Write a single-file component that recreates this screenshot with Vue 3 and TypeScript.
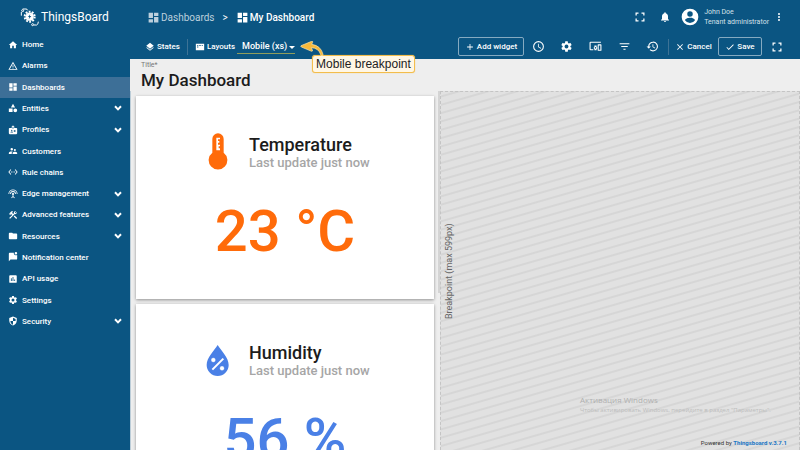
<script setup lang="ts">
import { h, ref } from 'vue'

const shapes: Record<string, string> = {
  home: 'M10 20v-6h4v6h5v-8h3L12 3 2 12h3v8z',
  alarms: 'M12 5.99 19.53 19H4.47L12 5.99M12 2 1 21h22L12 2zm1 14h-2v2h2v-2zm0-6h-2v5h2v-5z',
  dashboards: 'M3 13h8V3H3v10zm0 8h8v-6H3v6zm10 0h8V11h-8v10zm0-18v6h8V3h-8z',
  entities: 'M12 2 7 10.5h10zM17.5 13a4.5 4.5 0 1 0 0 9 4.5 4.5 0 0 0 0-9zM2 13h9v8.5H2z',
  profiles: 'M20 7h-5V4a2 2 0 0 0-2-2h-2a2 2 0 0 0-2 2v3H4a2 2 0 0 0-2 2v11a2 2 0 0 0 2 2h16a2 2 0 0 0 2-2V9a2 2 0 0 0-2-2zM11 4h2v5h-2zM9 11.5a1.5 1.5 0 1 1 0 3 1.5 1.5 0 0 1 0-3zM12 18H6v-.7c0-1.2 1.8-1.8 3-1.8s3 .6 3 1.8zm6-1.5h-4V15h4zm0-3h-4V12h4z',
  customers: 'M16.5 12a2.5 2.5 0 1 0 0-5 2.5 2.5 0 0 0 0 5zM9 11a3 3 0 1 0 0-6 3 3 0 0 0 0 6zm7.5 3c-1.83 0-5.5.92-5.5 2.75V19h11v-2.25C22 14.92 18.33 14 16.5 14zM9 13c-2.33 0-7 1.17-7 3.5V19h7v-2.25c0-.85.33-2.34 2.37-3.47C10.5 13.1 9.66 13 9 13z',
  rules: 'M7.77 6.76 6.23 5.48.82 12l5.41 6.52 1.54-1.28L3.42 12zM7 13h2v-2H7zm10-2h-2v2h2zm-6 2h2v-2h-2zm6.77-7.52-1.54 1.28L20.58 12l-4.35 5.24 1.54 1.28L23.18 12z',
  edge: 'M12 5a7 7 0 0 0-7 7h2a5 5 0 0 1 10 0h2a7 7 0 0 0-7-7zm1 9.29A2.5 2.5 0 1 0 11 14.29v3.3L7.59 21 9 22.41l3-3 3 3L16.41 21 13 17.59zM12 1A11 11 0 0 0 1 12h2a9 9 0 0 1 18 0h2A11 11 0 0 0 12 1z',
  advanced: 'm13.78 15.3 6 6 2.11-2.16-6-6zM17.5 10.1c1.93 0 3.5-1.57 3.5-3.5 0-.58-.16-1.12-.41-1.6l-2.7 2.7-1.49-1.49 2.7-2.7C18.62 3.26 18.08 3.1 17.5 3.1 15.57 3.1 14 4.67 14 6.6c0 .41.08.8.21 1.16l-1.85 1.85-1.78-1.78.71-.71-1.41-1.41L12 3.59a3 3 0 0 0-4.24 0L4.22 7.13l1.41 1.41H2.81l-.71.71 3.54 3.54.71-.71V9.25l1.41 1.41.71-.71 1.78 1.78-7.41 7.41 2.12 2.12L16.34 9.89c.36.13.75.21 1.16.21z',
  resources: 'M10 4H4a2 2 0 0 0-2 2v12a2 2 0 0 0 2 2h16a2 2 0 0 0 2-2V8a2 2 0 0 0-2-2h-8z',
  notification: 'M22 6.98V16a2 2 0 0 1-2 2H6l-4 4V4a2 2 0 0 1 2-2h10.1A5 5 0 0 0 19 8c1.13 0 2.16-.39 3-1.02zM16 3a3 3 0 1 0 6 0 3 3 0 0 0-6 0z',
  api: 'M19 3H5a2 2 0 0 0-2 2v14a2 2 0 0 0 2 2h14a2 2 0 0 0 2-2V5a2 2 0 0 0-2-2zM9 17H7v-7h2zm4 0h-2V7h2zm4 0h-2v-4h2z',
  settings: 'M19.14 12.94c.04-.3.06-.61.06-.94s-.02-.64-.07-.94l2.03-1.58a.49.49 0 0 0 .12-.61l-1.92-3.32a.49.49 0 0 0-.59-.22l-2.39.96a7 7 0 0 0-1.62-.94l-.36-2.54A.48.48 0 0 0 13.92 2.4h-3.84a.48.48 0 0 0-.48.41l-.36 2.54a7 7 0 0 0-1.62.94l-2.39-.96a.48.48 0 0 0-.59.22L2.72 8.87a.48.48 0 0 0 .12.61l2.03 1.58a6.5 6.5 0 0 0 0 1.88l-2.03 1.58a.49.49 0 0 0-.12.61l1.92 3.32c.12.22.37.29.59.22l2.39-.96c.5.38 1.03.7 1.62.94l.36 2.54c.05.24.24.41.48.41h3.84c.24 0 .44-.17.48-.41l.36-2.54a7 7 0 0 0 1.62-.94l2.39.96c.22.08.47 0 .59-.22l1.92-3.32a.48.48 0 0 0-.12-.61zM12 15.6a3.6 3.6 0 1 1 0-7.2 3.6 3.6 0 0 1 0 7.2z',
  security: 'M12 1 3 5v6c0 5.55 3.84 10.74 9 12 5.16-1.26 9-6.45 9-12V5zm0 3.2 6.2 2.75V12H12v8.9c-3.7-1.2-6.2-4.9-6.2-8.9H12z',
  chevron: 'M7.41 7.2 12 11.8l4.59-4.6L19.4 10 12 17.4 4.6 10z',
  states: 'm11.99 18.54-7.37-5.73L3 14.07l9 7 9-7-1.63-1.27zM12 16l7.36-5.73L21 9l-9-7-9 7 1.63 1.27z',
  layouts: 'M2 4h20v16H2zM5 7v2h3V7zm5 0v2h4V7zm6 0v2h3V7zM5 11v2h3v-2z',
  plus: 'M19 13h-6v6h-2v-6H5v-2h6V5h2v6h6z',
  clock: 'M12 2a10 10 0 1 0 0 20 10 10 0 0 0 0-20zm0 18a8 8 0 1 1 0-16 8 8 0 0 1 0 16zm.5-13H11v6l5.25 3.15.75-1.23-4.5-2.67z',
  devices: 'M3 5h19V3H3a2 2 0 0 0-2 2v12a2 2 0 0 0 2 2h5v-2H3zm11 5h-4v1.8a3.5 3.5 0 0 0 0 5.4V19h4v-1.8a3.5 3.5 0 0 0 0-5.4zm-2 6a1.5 1.5 0 1 1 0-3 1.5 1.5 0 0 1 0 3zM22 8h-5a1 1 0 0 0-1 1v10a1 1 0 0 0 1 1h5a1 1 0 0 0 1-1V9a1 1 0 0 0-1-1zm-1 10h-3v-8h3z',
  filter: 'M10 18h4v-2h-4zM3 6v2h18V6zm3 7h12v-2H6z',
  history: 'M13 3a9 9 0 0 0-9 9H1l3.89 3.89.07.14L9 12H6a7 7 0 1 1 2.06 4.94l-1.42 1.42A9 9 0 1 0 13 3zm-1 5v5l4.28 2.54.72-1.21-3.5-2.08V8z',
  close: 'M19 6.41 17.59 5 12 10.59 6.41 5 5 6.41 10.59 12 5 17.59 6.41 19 12 13.41 17.59 19 19 17.59 13.41 12z',
  check: 'M9 16.17 4.83 12l-1.42 1.41L9 19 21 7l-1.41-1.41z',
  fullscreen: 'M3 3h6v2.5H5.5V9H3zm12 0h6v6h-2.5V5.5H15zM3 15h2.5v3.5H9V21H3zm15.5 0H21v6h-6v-2.5h3.5z',
  bell: 'M12 22a2 2 0 0 0 2-2h-4a2 2 0 0 0 2 2zm6-6v-5c0-3.07-1.64-5.64-4.5-6.32V4a1.5 1.5 0 0 0-3 0v.68C7.63 5.36 6 7.92 6 11v5l-2 2v1h16v-1z',
  account: 'M12 2a10 10 0 1 0 0 20 10 10 0 0 0 0-20zm0 3a3.3 3.3 0 1 1 0 6.6A3.3 3.3 0 0 1 12 5zm0 14.2a7.2 7.2 0 0 1-6-3.22c.03-1.99 4-3.08 6-3.08s5.97 1.09 6 3.08a7.2 7.2 0 0 1-6 3.22z',
  more: 'M12 8a2 2 0 1 0 0-4 2 2 0 0 0 0 4zm0 2a2 2 0 1 0 0 4 2 2 0 0 0 0-4zm0 6a2 2 0 1 0 0 4 2 2 0 0 0 0-4z',
}

const Icon = (props: { name: string }) =>
  h('svg', { viewBox: '0 0 24 24', 'aria-hidden': 'true', fill: 'currentColor' }, [
    h('path', { d: shapes[props.name], 'fill-rule': 'evenodd' }),
  ])

interface MenuItem {
  icon: string
  label: string
  expandable?: boolean
}

const menu: MenuItem[] = [
  { icon: 'home', label: 'Home' },
  { icon: 'alarms', label: 'Alarms' },
  { icon: 'dashboards', label: 'Dashboards' },
  { icon: 'entities', label: 'Entities', expandable: true },
  { icon: 'profiles', label: 'Profiles', expandable: true },
  { icon: 'customers', label: 'Customers' },
  { icon: 'rules', label: 'Rule chains' },
  { icon: 'edge', label: 'Edge management', expandable: true },
  { icon: 'advanced', label: 'Advanced features', expandable: true },
  { icon: 'resources', label: 'Resources', expandable: true },
  { icon: 'notification', label: 'Notification center' },
  { icon: 'api', label: 'API usage' },
  { icon: 'settings', label: 'Settings' },
  { icon: 'security', label: 'Security', expandable: true },
]

const tools = [
  { icon: 'clock', label: 'Time window' },
  { icon: 'settings', label: 'Dashboard settings' },
  { icon: 'devices', label: 'Entity aliases' },
  { icon: 'filter', label: 'Filters' },
  { icon: 'history', label: 'Version control' },
]

const active = ref('Dashboards')
const title = ref('My Dashboard')
const breakpoint = ref('xs')
</script>

<template>
  <div class="page">
    <aside class="sidebar">
      <a class="brand" href="#">
        <svg class="logo" viewBox="0 0 60 60" aria-hidden="true" fill="none" stroke="#fff">
          <circle cx="29" cy="29" r="12" fill="#fff" />
          <circle cx="29" cy="29" r="15" stroke-width="6" stroke-dasharray="5.500 3.925" />
          <path d="M31 21 24 30h4l-2 7 8-10h-5z" fill="#0b5582" stroke="none" />
          <circle cx="8" cy="11" r="3" stroke-width="3" />
          <path d="M4 26V15M8 6h10q4 0 5 4" stroke-width="3" />
          <circle cx="38" cy="53" r="3" stroke-width="3" />
          <path d="M42 54h8q5-2 5-10" stroke-width="3" />
        </svg>
        <span>ThingsBoard</span>
      </a>
      <nav class="menu" aria-label="Main">
        <a
          v-for="item in menu"
          :key="item.label"
          href="#"
          class="item"
          :class="{ active: item.label === active }"
          @click.prevent="active = item.label"
        >
          <Icon :name="item.icon" class="item-icon" />
          <span>{{ item.label }}</span>
          <Icon v-if="item.expandable" name="chevron" class="chevron" />
        </a>
      </nav>
    </aside>

    <div class="main">
      <header class="header">
        <nav class="crumbs" aria-label="Breadcrumb">
          <a href="#" class="crumb parent"><Icon name="dashboards" class="crumb-icon" />Dashboards</a>
          <span class="sep">&gt;</span>
          <a href="#" class="crumb"><Icon name="dashboards" class="crumb-icon" />My Dashboard</a>
        </nav>
        <div class="account">
          <button class="icon-btn" aria-label="Fullscreen"><Icon name="fullscreen" class="i12" /></button>
          <button class="icon-btn" aria-label="Notifications"><Icon name="bell" class="i12" /></button>
          <Icon name="account" class="avatar" />
          <div class="user">
            <span>John Doe</span>
            <span>Tenant administrator</span>
          </div>
          <button class="icon-btn more" aria-label="More"><Icon name="more" class="i12" /></button>
        </div>
      </header>

      <div class="toolbar">
        <button class="text-btn"><Icon name="states" class="i10" />States</button>
        <span class="divider"></span>
        <button class="text-btn"><Icon name="layouts" class="i10" />Layouts</button>
        <div class="picker">
          <select v-model="breakpoint" aria-label="Breakpoint">
            <option value="xs">Mobile (xs)</option>
            <option value="default">Default</option>
          </select>
          <div class="callout">
            <svg class="arrow" viewBox="0 0 72 45" aria-hidden="true">
              <path
                d="M3 14 35 1q4-1 3 3l-3 6q28 4 34 30 1 4-3 4t-4-3Q56 21 34 20l3 7q2 4-2 4L4 18q-3-2-1-4z"
                fill="#f6b93b"
                stroke="#ffe9b0"
                stroke-width="2"
              />
            </svg>
            <span class="bubble">Mobile breakpoint</span>
          </div>
        </div>
        <div class="actions">
          <button class="text-btn outlined add"><Icon name="plus" class="i10" />Add widget</button>
          <div class="tools">
            <button v-for="tool in tools" :key="tool.icon" class="tool" :aria-label="tool.label">
              <Icon :name="tool.icon" class="i13" />
            </button>
          </div>
          <span class="divider"></span>
          <button class="text-btn cancel"><Icon name="close" class="i10" />Cancel</button>
          <button class="text-btn outlined save"><Icon name="check" class="i10" />Save</button>
          <button class="tool expand" aria-label="Expand"><Icon name="fullscreen" class="i12" /></button>
        </div>
      </div>

      <div class="title">
        <label for="dashboard-title">Title*</label>
        <input id="dashboard-title" v-model="title" type="text" />
      </div>

      <main class="canvas">
        <div class="widgets">
          <section class="card warm">
            <div class="card-head">
              <svg class="card-icon" viewBox="0 0 72 114" aria-hidden="true">
                <path
                  d="M36 1a17 17 0 0 0-17 17v41a28 28 0 1 0 34 0V18A17 17 0 0 0 36 1zM31 14h11v5h-6v5h4v5h-4v6h6v5h-4v6h4v6H31z"
                  fill="currentColor"
                  fill-rule="evenodd"
                />
              </svg>
              <div>
                <h2>Temperature</h2>
                <p>Last update just now</p>
              </div>
            </div>
            <strong class="value">23 °C</strong>
          </section>
          <section class="card cool">
            <div class="card-head">
              <svg class="card-icon" viewBox="0 0 72 114" aria-hidden="true">
                <path d="M35 12C24 30 2 50 2 72a33 33 0 0 0 66 0C68 50 46 30 35 12z" fill="currentColor" />
                <g stroke="#fff" fill="#fff">
                  <path d="M19 86 52 53" stroke-width="6" />
                  <circle cx="22" cy="57" r="6" />
                  <circle cx="48" cy="82" r="6" />
                </g>
              </svg>
              <div>
                <h2>Humidity</h2>
                <p>Last update just now</p>
              </div>
            </div>
            <strong class="value">56 %</strong>
          </section>
        </div>
        <div class="scroll"><span class="thumb"></span></div>
        <div class="outside">
          <span class="limit">Breakpoint (max 599px)</span>
          <div class="watermark">
            <span class="wm-title">Активация Windows</span>
            <span>Чтобы активировать Windows, перейдите в раздел "Параметры".</span>
          </div>
          <footer class="powered">Powered by <a href="#">Thingsboard v.3.7.1</a></footer>
        </div>
      </main>
    </div>
  </div>
</template>

<style>
body {
  margin: 0;
  overflow: hidden;
}
</style>

<style scoped>
.page {
  display: flex;
  height: 100vh;
  overflow: hidden;
  font-family: Roboto, "Liberation Sans", sans-serif;
  color: #fff;
  background: #eee;
}
.page * {
  box-sizing: border-box;
}
a {
  color: inherit;
  text-decoration: none;
}
button {
  font: inherit;
  color: inherit;
  background: none;
  border: 0;
  padding: 0;
  cursor: pointer;
}
svg {
  flex: none;
  display: block;
}
.sidebar {
  flex: none;
  width: 130px;
  background: #0b5582;
}
.brand {
  display: flex;
  align-items: center;
  gap: 1px;
  height: 34px;
  padding-left: 20px;
  font-size: 12px;
}
.logo {
  width: 20px;
  height: 20px;
}
.menu {
  display: grid;
  grid-auto-rows: 1fr;
  height: 298px;
}
.item {
  display: flex;
  align-items: center;
  gap: 4px;
  padding: 0 6px 0 8px;
  font-size: 8px;
  font-weight: 500;
  white-space: nowrap;
}
.item.active {
  background: #3d6f97;
}
.item-icon,
.i10 {
  width: 10px;
  height: 10px;
}
.i12 {
  width: 12px;
  height: 12px;
}
.i13 {
  width: 13px;
  height: 13px;
}
.chevron {
  width: 12px;
  height: 12px;
  margin-left: auto;
}
.main {
  flex: 1;
  min-width: 0;
  display: flex;
  flex-direction: column;
}
.header {
  flex: none;
  display: flex;
  align-items: center;
  justify-content: space-between;
  height: 34px;
  padding: 0 13px 0 17px;
  background: #0b5582;
}
.crumbs,
.crumb,
.account {
  display: flex;
  align-items: center;
}
.crumbs {
  gap: 8px;
  font-size: 10px;
}
.crumb {
  gap: 1px;
  font-weight: 500;
}
.crumb.parent {
  font-weight: 400;
  color: #bdd0dd;
}
.crumb-icon {
  width: 13px;
  height: 13px;
}
.icon-btn {
  display: grid;
  place-items: center;
  width: 25px;
  height: 24px;
}
.avatar {
  width: 20px;
  height: 20px;
  margin-left: 3px;
}
.user {
  display: flex;
  flex-direction: column;
  margin-left: 4px;
  font-size: 7px;
  line-height: 10px;
  color: #d4e0e9;
}
.icon-btn.more {
  width: 16px;
  margin-left: 2px;
}
.toolbar {
  flex: none;
  display: flex;
  align-items: center;
  height: 25px;
  padding: 0 13px 0 15px;
  background: #0b5582;
  font-size: 8px;
  font-weight: 500;
}
.text-btn {
  display: flex;
  align-items: center;
  justify-content: center;
  gap: 2px;
  white-space: nowrap;
}
.divider {
  width: 1px;
  height: 16px;
  margin: 0 7px;
  background: #3d7396;
}
.outlined {
  height: 19px;
  border: 1px solid #85aac1;
  border-radius: 2px;
}
.picker {
  position: relative;
  margin-left: 2px;
}
.picker select {
  display: block;
  width: 58px;
  height: 14px;
  padding: 0 5px;
  font: inherit;
  font-size: 9px;
  color: inherit;
  appearance: none;
  border: 0;
  border-bottom: 1px solid #8f9d5c;
  border-radius: 0;
  background: none;
}
.picker::after {
  content: "";
  position: absolute;
  right: 0;
  top: 6px;
  border: 3px solid transparent;
  border-top-color: #fff;
  border-bottom: 0;
}
.callout {
  position: absolute;
  left: 63px;
  top: 1px;
  z-index: 2;
}
.arrow {
  width: 24px;
  height: 15px;
}
.bubble {
  display: block;
  margin: -1px 0 0 12px;
  padding: 0 3px;
  border: 1px solid #f3bd4c;
  border-radius: 3px;
  background: #fff7e6;
  color: #222;
  font: 12px/16px "Liberation Sans", sans-serif;
  white-space: nowrap;
  box-shadow: 0 0 1px #f3bd4c;
}
.actions {
  display: flex;
  align-items: center;
  margin-left: auto;
}
.actions .divider {
  margin: 0 6px 0 1px;
}
.add {
  width: 66px;
}
.tools {
  display: grid;
  grid-template-columns: repeat(5, 1fr);
  width: 143px;
}
.tool {
  display: grid;
  place-items: center;
}
.cancel {
  width: 37px;
}
.save {
  width: 44px;
  margin-left: 6px;
}
.expand {
  width: 20px;
  margin-left: 5px;
}
.title {
  flex: none;
  display: flex;
  flex-direction: column;
  height: 32px;
  padding: 2px 10px 0 11px;
  color: #1c1c1c;
}
.title label {
  font-size: 7px;
  line-height: 8px;
  color: #777;
}
.title input {
  width: 100%;
  height: 22px;
  padding: 0;
  border: 0;
  background: none;
  font: 500 17px/22px Roboto, "Liberation Sans", sans-serif;
  color: inherit;
  outline: 0;
}
.canvas {
  flex: 1;
  min-height: 0;
  display: grid;
  grid-template-columns: 308px 2px 1fr;
}
.widgets {
  display: flex;
  flex-direction: column;
  gap: 5px;
  padding: 5px 4px 0 5px;
  border-left: 1px solid #bccdd8;
  overflow: hidden;
}
.card {
  flex: none;
  display: flex;
  flex-direction: column;
  align-items: center;
  height: 203px;
  padding-top: 37px;
  background: #fff;
  box-shadow: 0 1px 3px #0006;
}
.card.warm {
  color: #ff6b0a;
}
.card.cool {
  color: #4a80e6;
}
.card-head {
  display: flex;
  align-items: center;
  gap: 19px;
  width: 168px;
  margin-left: 10px;
}
.card-icon {
  width: 24px;
  height: 38px;
}
.card h2 {
  margin: 0;
  font-size: 18px;
  font-weight: 500;
  line-height: 21px;
  color: #1c1c1c;
}
.card p {
  margin: 0;
  font-size: 13px;
  font-weight: 500;
  line-height: 15px;
  color: #a6a6a6;
  white-space: nowrap;
}
.value {
  margin-top: 24px;
  font-size: 58px;
  font-weight: 500;
  line-height: 72px;
}
.thumb {
  display: block;
  width: 4px;
  height: 202px;
  background: #d4d4d4;
}
.outside {
  position: relative;
  display: flex;
  flex-direction: column;
  justify-content: flex-end;
  border: 1px dashed #c4c4c4;
  border-bottom: 0;
  background: repeating-linear-gradient(-16deg, #e1e1e1 0 5px, #d6d6d6 6px 7px, #e1e1e1 8px);
}
.limit {
  position: absolute;
  left: 2px;
  top: 0;
  bottom: 0;
  writing-mode: vertical-rl;
  transform: rotate(180deg);
  text-align: center;
  font-size: 9px;
  line-height: 12px;
  color: #666;
}
.watermark {
  display: flex;
  flex-direction: column;
  align-self: flex-end;
  width: 206px;
  margin-right: 13px;
  font: 6px/8px "Open Sans", sans-serif;
  color: #bdbdbd;
  white-space: nowrap;
}
.wm-title {
  font-size: 8px;
  line-height: 12px;
  color: #b0b0b0;
}
.powered {
  margin-top: 24px;
  padding: 0 12px 2px;
  text-align: right;
  font-size: 6px;
  line-height: 10px;
  color: #333;
}
.powered a {
  font-weight: 700;
  color: #1976c5;
}
</style>
